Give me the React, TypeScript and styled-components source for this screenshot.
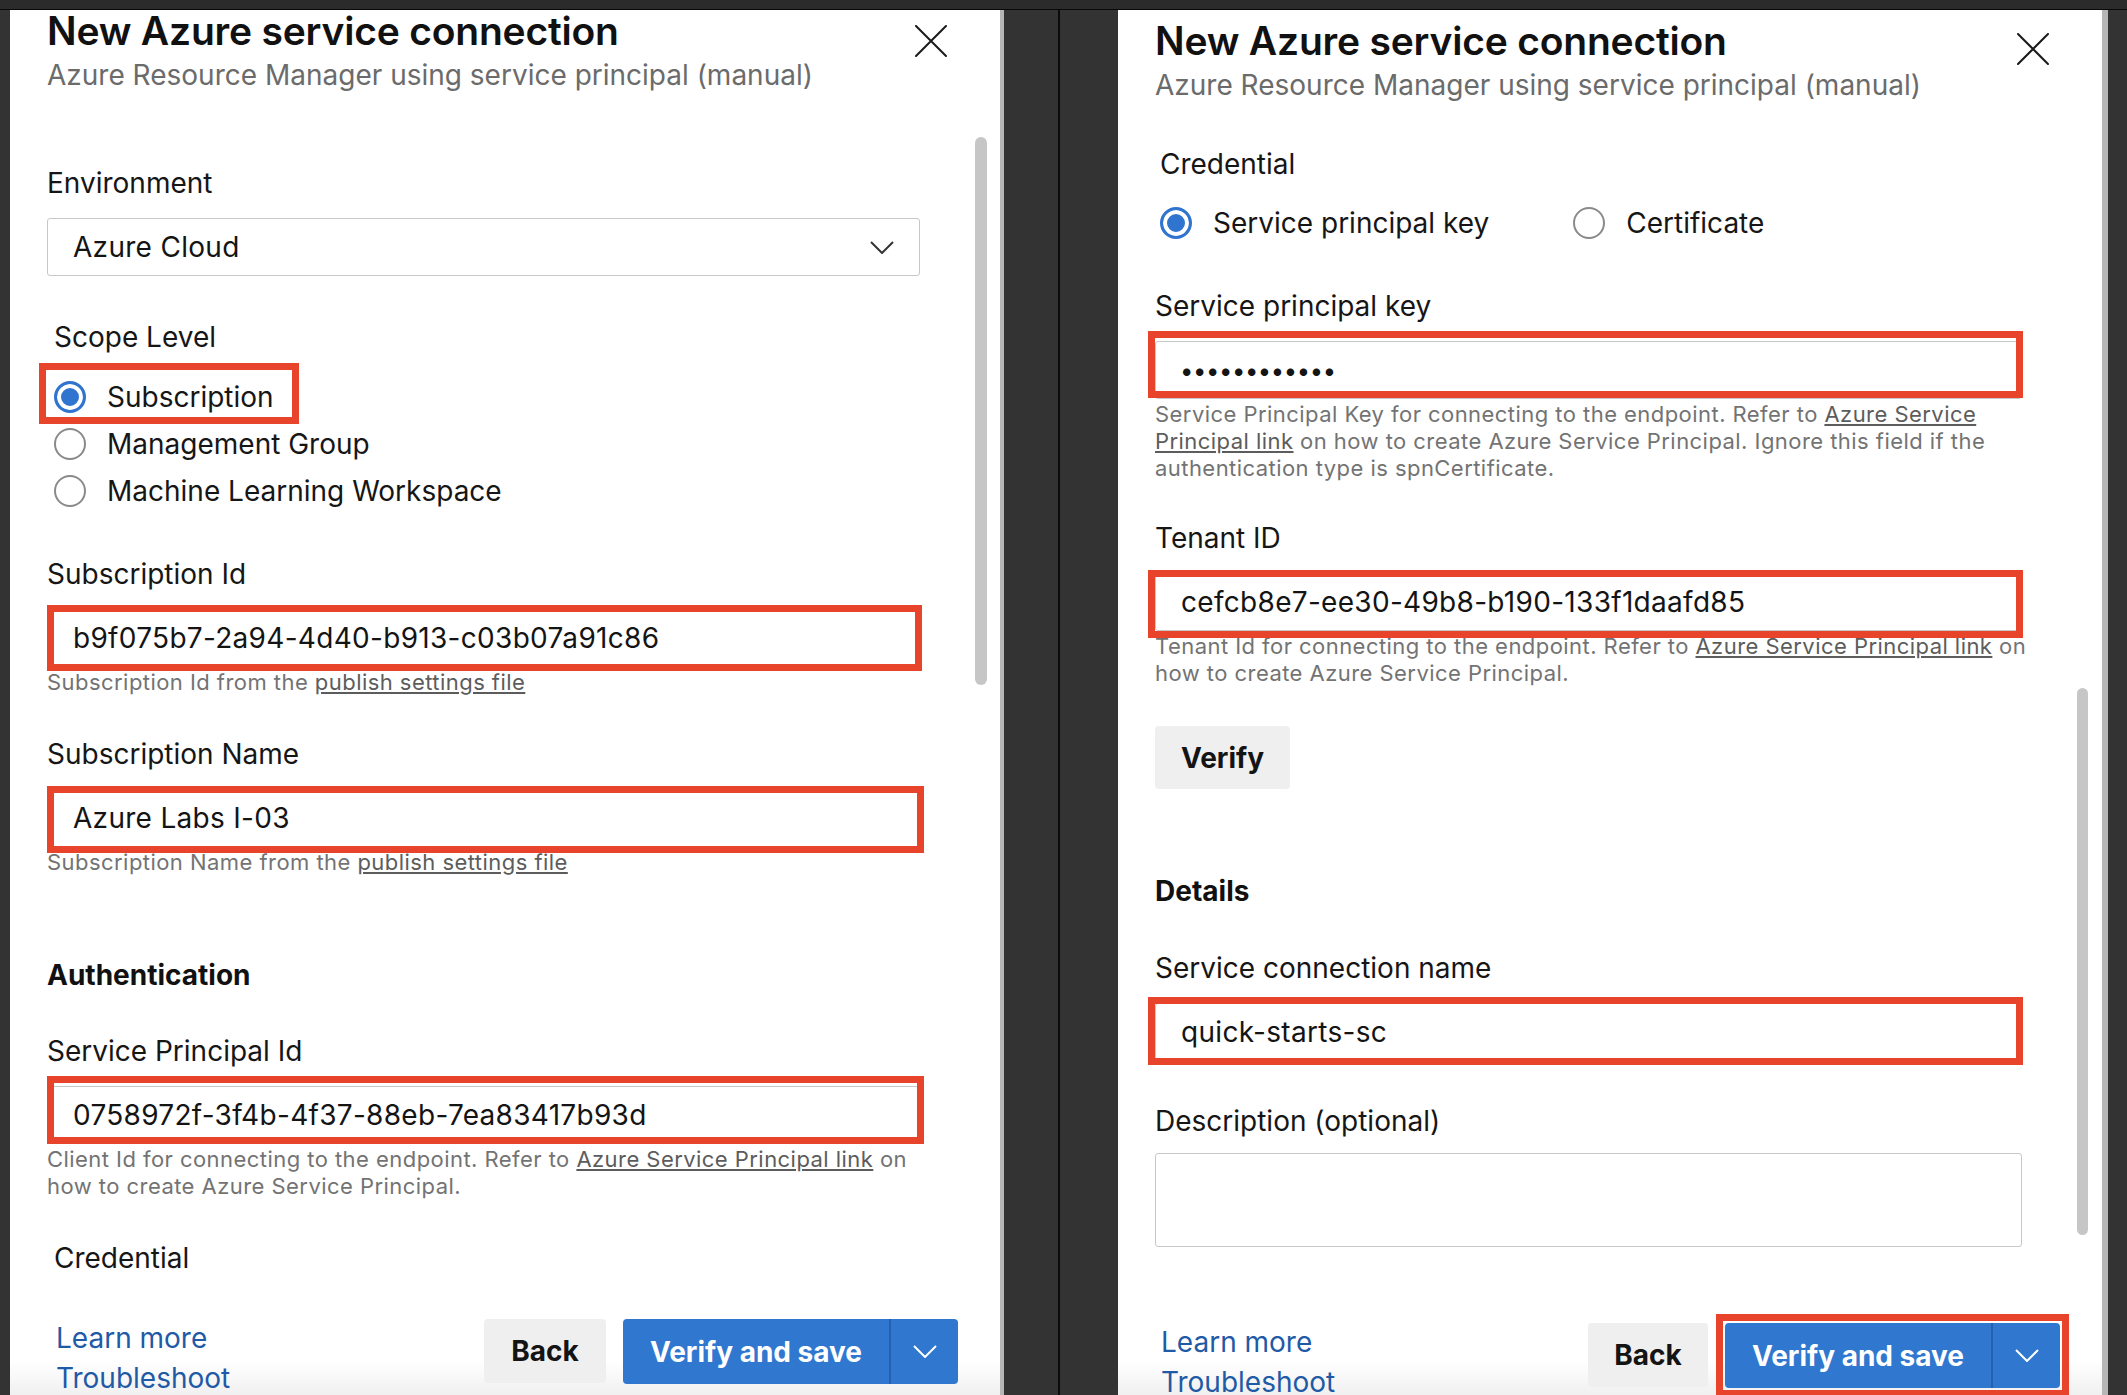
import React from "react";
import styled, { createGlobalStyle } from "styled-components";

const FONT = `Inter, "Liberation Sans", Arial, sans-serif`;

const GlobalStyle = createGlobalStyle`
  *, *::before, *::after { box-sizing: border-box; }
  html, body { margin: 0; padding: 0; }
  body { background: #323232; font-family: ${FONT}; color: #161616; }
`;

const Screen = styled.div`
  width: 2127px;
  height: 1395px;
  display: flex;
  flex-direction: column;
  background: #333333;
  overflow: hidden;
`;

const TitleBar = styled.div`
  flex: none;
  height: 10px;
  background: #2b2b2b;
  border-bottom: 1px solid #080808;
`;

const Windows = styled.div`
  flex: 1;
  min-height: 0;
  display: flex;
  padding-left: 10px;
`;

const Window = styled.section<{ $width: number; $edge: number }>`
  position: relative;
  flex: none;
  width: ${(p) => p.$width}px;
  height: 100%;
  display: flex;
  flex-direction: column;
  background: #ffffff;
  border-right: ${(p) => p.$edge}px solid #b6b6b6;
`;

const WindowGap = styled.div`
  flex: none;
  width: 114px;
  background: linear-gradient(
    to right,
    transparent 54px,
    #0b0b0b 54px,
    #0b0b0b 56px,
    transparent 56px
  );
`;

const Header = styled.header<{ $top: number }>`
  flex: none;
  display: flex;
  justify-content: space-between;
  align-items: flex-start;
  padding: ${(p) => p.$top}px 53px 0 37px;
`;

const Title = styled.h1`
  margin: 0;
  font-size: 39px;
  line-height: 42px;
  font-weight: 600;
  color: #111111;
  letter-spacing: -0.2px;
`;

const Subtitle = styled.div`
  margin-top: 7px;
  font-size: 28px;
  line-height: 32px;
  color: #6b6b6b;
`;

const CloseButton = styled.button<{ $top: number }>`
  flex: none;
  margin-top: ${(p) => p.$top}px;
  width: 32px;
  height: 32px;
  padding: 0;
  border: 0;
  background: none;
  display: flex;
`;

const Body = styled.div`
  flex: 1;
  min-height: 0;
  overflow: hidden;
  padding: 0 80px 0 37px;
`;

const Label = styled.div<{ $mt: number; $indent?: number }>`
  margin-top: ${(p) => p.$mt}px;
  padding-left: ${(p) => p.$indent ?? 0}px;
  font-size: 28px;
  line-height: 32px;
  color: #161616;
`;

const SectionTitle = styled.h2<{ $mt: number }>`
  margin: ${(p) => p.$mt}px 0 0 0;
  font-size: 28px;
  line-height: 32px;
  font-weight: 700;
  color: #111111;
`;

const Highlight = styled.div<{
  $inset: [number, number, number, number];
  $mt?: number;
  $fit?: boolean;
}>`
  position: relative;
  margin-top: ${(p) => p.$mt ?? 0}px;
  width: ${(p) => (p.$fit ? "fit-content" : "auto")};
  &::after {
    content: "";
    position: absolute;
    top: ${(p) => -p.$inset[0]}px;
    right: ${(p) => -p.$inset[1]}px;
    bottom: ${(p) => -p.$inset[2]}px;
    left: ${(p) => -p.$inset[3]}px;
    border: 7px solid #e8432b;
    pointer-events: none;
    z-index: 2;
  }
`;

const TextBox = styled.div<{ $mt?: number }>`
  margin-top: ${(p) => p.$mt ?? 0}px;
  height: 58px;
  display: flex;
  align-items: center;
  justify-content: space-between;
  padding: 0 25px;
  border: 1px solid #c8c8c8;
  border-radius: 3px;
  background: #ffffff;
  font-size: 28px;
  letter-spacing: 0.3px;
  color: #141414;
  white-space: nowrap;
`;

const TextArea = styled.div<{ $mt: number }>`
  margin-top: ${(p) => p.$mt}px;
  height: 94px;
  border: 1px solid #c8c8c8;
  border-radius: 3px;
  background: #ffffff;
`;

const Dots = styled.span`
  font-size: 24px;
  letter-spacing: 1.6px;
  font-weight: 700;
`;

const Helper = styled.div`
  margin-top: 2px;
  font-size: 22px;
  letter-spacing: 0.45px;
  line-height: 27px;
  color: #737373;
  white-space: nowrap;
`;

const HelperLink = styled.span`
  text-decoration: underline;
  color: #5c5c5c;
`;

const RadioGroup = styled.div<{
  $dir: "row" | "column";
  $mt: number;
  $indent: number;
  $gap?: number;
}>`
  display: flex;
  flex-direction: ${(p) => p.$dir};
  margin-top: ${(p) => p.$mt}px;
  padding-left: ${(p) => p.$indent}px;
  column-gap: ${(p) => p.$gap ?? 0}px;
`;

const RadioRow = styled.div`
  display: flex;
  align-items: center;
  gap: 21px;
  height: 47px;
  width: fit-content;
  font-size: 28px;
  color: #161616;
`;

const RadioCircle = styled.span<{ $checked?: boolean }>`
  flex: none;
  width: 32px;
  height: 32px;
  border-radius: 50%;
  border: ${(p) => (p.$checked ? "3px solid #2f74cf" : "2px solid #8a8a8a")};
  background: ${(p) => (p.$checked ? "#2f74cf" : "#ffffff")};
  box-shadow: ${(p) => (p.$checked ? "inset 0 0 0 4px #ffffff" : "none")};
`;

const PlainButton = styled.button<{ $w: number; $h: number; $mt?: number }>`
  display: block;
  margin-top: ${(p) => p.$mt ?? 0}px;
  width: ${(p) => p.$w}px;
  height: ${(p) => p.$h}px;
  border: 0;
  border-radius: 4px;
  background: #efefef;
  font-family: ${FONT};
  font-size: 28px;
  font-weight: 700;
  color: #141414;
  padding: 0;
`;

const Footer = styled.footer<{ $top: number; $left: number }>`
  flex: none;
  height: 105px;
  overflow: hidden;
  display: flex;
  justify-content: space-between;
  align-items: flex-start;
  padding: ${(p) => p.$top}px 42px 0 ${(p) => p.$left}px;
  background: linear-gradient(to bottom, #ffffff 0%, #ffffff 68%, #f0f0f0 100%);
`;

const Links = styled.div`
  display: flex;
  flex-direction: column;
  margin-top: -1px;
`;

const FooterLink = styled.a`
  font-size: 28px;
  line-height: 40px;
  color: #1f5aa6;
  text-decoration: none;
`;

const Actions = styled.div`
  display: flex;
  align-items: flex-start;
  gap: 17px;
`;

const SplitButton = styled.div`
  display: flex;
  height: 65px;
  border-radius: 4px;
  overflow: hidden;
  background: #3077cf;
`;

const SplitMain = styled.button`
  width: 268px;
  border: 0;
  border-right: 2px solid #2460ad;
  background: none;
  padding: 0;
  font-family: ${FONT};
  font-size: 28px;
  font-weight: 700;
  color: #ffffff;
`;

const SplitToggle = styled.button`
  width: 67px;
  border: 0;
  background: none;
  padding: 0;
  display: flex;
  align-items: center;
  justify-content: center;
`;

const ScrollThumb = styled.div<{ $top: number; $height: number; $right: number; $w: number }>`
  position: absolute;
  top: ${(p) => p.$top}px;
  right: ${(p) => p.$right}px;
  width: ${(p) => p.$w}px;
  height: ${(p) => p.$height}px;
  border-radius: 6px;
  background: #c6c6c6;
`;

const CloseIcon = () => (
  <svg width="32" height="32" viewBox="0 0 32 32">
    <path d="M1 1 L31 31 M31 1 L1 31" stroke="#1a1a1a" strokeWidth="2" strokeLinecap="round" fill="none" />
  </svg>
);

const Chevron = ({ color }: { color: string }) => (
  <svg width="24" height="13" viewBox="0 0 24 13">
    <path d="M1 1 L12 12 L23 1" stroke={color} strokeWidth="2" fill="none" />
  </svg>
);

const Radio = ({ label, checked }: { label: string; checked?: boolean }) => (
  <RadioRow>
    <RadioCircle $checked={checked} />
    <span>{label}</span>
  </RadioRow>
);

const DialogHeader = ({ top, closeTop }: { top: number; closeTop: number }) => (
  <Header $top={top}>
    <div>
      <Title>New Azure service connection</Title>
      <Subtitle>Azure Resource Manager using service principal (manual)</Subtitle>
    </div>
    <CloseButton $top={closeTop} aria-label="Close">
      <CloseIcon />
    </CloseButton>
  </Header>
);

const VerifyAndSave = () => (
  <SplitButton>
    <SplitMain>Verify and save</SplitMain>
    <SplitToggle aria-label="More">
      <Chevron color="#ffffff" />
    </SplitToggle>
  </SplitButton>
);

export default function App() {
  return (
    <>
      <GlobalStyle />
      <Screen>
        <TitleBar />
        <Windows>
          <Window $width={994} $edge={4}>
            <DialogHeader top={0} closeTop={15} />
            <Body>
              <Label $mt={76}>Environment</Label>
              <TextBox $mt={19}>
                <span>Azure Cloud</span>
                <Chevron color="#333333" />
              </TextBox>

              <Label $mt={45} $indent={7}>Scope Level</Label>
              <RadioGroup $dir="column" $mt={20} $indent={7}>
                <Highlight $inset={[10, 25, 4, 15]} $fit>
                  <Radio label="Subscription" checked />
                </Highlight>
                <Radio label="Management Group" />
                <Radio label="Machine Learning Workspace" />
              </RadioGroup>

              <Label $mt={44}>Subscription Id</Label>
              <Highlight $inset={[4, 2, 4, 0]} $mt={19}>
                <TextBox>b9f075b7-2a94-4d40-b913-c03b07a91c86</TextBox>
              </Highlight>
              <Helper>
                Subscription Id from the <HelperLink>publish settings file</HelperLink>
              </Helper>

              <Label $mt={42}>Subscription Name</Label>
              <Highlight $inset={[3, 4, 6, 0]} $mt={19}>
                <TextBox>Azure Labs I-03</TextBox>
              </Highlight>
              <Helper>
                Subscription Name from the <HelperLink>publish settings file</HelperLink>
              </Helper>

              <SectionTitle $mt={83}>Authentication</SectionTitle>

              <Label $mt={44}>Service Principal Id</Label>
              <Highlight $inset={[10, 4, 0, 0]} $mt={19}>
                <TextBox>0758972f-3f4b-4f37-88eb-7ea83417b93d</TextBox>
              </Highlight>
              <Helper>
                Client Id for connecting to the endpoint. Refer to{" "}
                <HelperLink>Azure Service Principal link</HelperLink> on
                <br />
                how to create Azure Service Principal.
              </Helper>

              <Label $mt={42} $indent={7}>Credential</Label>
            </Body>
            <Footer $top={29} $left={46}>
              <Links>
                <FooterLink href="#">Learn more</FooterLink>
                <FooterLink href="#">Troubleshoot</FooterLink>
              </Links>
              <Actions>
                <PlainButton $w={122} $h={64}>Back</PlainButton>
                <VerifyAndSave />
              </Actions>
            </Footer>
            <ScrollThumb $top={127} $height={548} $right={13} $w={12} />
          </Window>

          <WindowGap />

          <Window $width={990} $edge={6}>
            <DialogHeader top={10} closeTop={13} />
            <Body>
              <Label $mt={47} $indent={5}>Credential</Label>
              <RadioGroup $dir="row" $mt={19} $indent={5} $gap={84}>
                <Radio label="Service principal key" checked />
                <Radio label="Certificate" />
              </RadioGroup>

              <Label $mt={44}>Service principal key</Label>
              <Highlight $inset={[10, 1, -1, 7]} $mt={19}>
                <TextBox>
                  <Dots>••••••••••••</Dots>
                </TextBox>
              </Highlight>
              <Helper>
                Service Principal Key for connecting to the endpoint. Refer to{" "}
                <HelperLink>Azure Service</HelperLink>
                <br />
                <HelperLink>Principal link</HelperLink> on how to create Azure Service Principal. Ignore this field if the
                <br />
                authentication type is spnCertificate.
              </Helper>

              <Label $mt={40}>Tenant ID</Label>
              <Highlight $inset={[3, 1, 7, 7]} $mt={19}>
                <TextBox>cefcb8e7-ee30-49b8-b190-133f1daafd85</TextBox>
              </Highlight>
              <Helper>
                Tenant Id for connecting to the endpoint. Refer to{" "}
                <HelperLink>Azure Service Principal link</HelperLink> on
                <br />
                how to create Azure Service Principal.
              </Helper>

              <PlainButton $w={135} $h={63} $mt={39}>Verify</PlainButton>

              <SectionTitle $mt={86}>Details</SectionTitle>

              <Label $mt={45}>Service connection name</Label>
              <Highlight $inset={[6, 1, 4, 7]} $mt={19}>
                <TextBox>quick-starts-sc</TextBox>
              </Highlight>

              <Label $mt={44}>Description (optional)</Label>
              <TextArea $mt={16} />
            </Body>
            <Footer $top={33} $left={43}>
              <Links>
                <FooterLink href="#">Learn more</FooterLink>
                <FooterLink href="#">Troubleshoot</FooterLink>
              </Links>
              <Actions>
                <PlainButton $w={120} $h={64}>Back</PlainButton>
                <Highlight $inset={[9, 9, 9, 9]} $fit>
                  <VerifyAndSave />
                </Highlight>
              </Actions>
            </Footer>
            <ScrollThumb $top={678} $height={547} $right={14} $w={11} />
          </Window>
        </Windows>
      </Screen>
    </>
  );
}
